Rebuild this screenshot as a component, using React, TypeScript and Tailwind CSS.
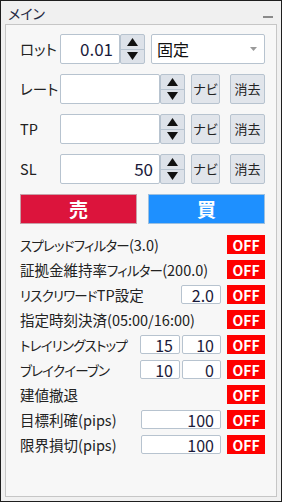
import React from 'react';

// katakana runs are drawn a touch smaller and tighter, as the narrow kana of the reference font
const Label = ({ text }: { text: string }) => (
  <>
    {text.split(/([\u30A0-\u30FF]+)/).map((part, i) =>
      /[\u30A0-\u30FF]/.test(part) ? (
        <span key={i} className="text-[13.5px] tracking-[-0.8px]">
          {part}
        </span>
      ) : (
        <span key={i}>{part}</span>
      )
    )}
  </>
);

const Spinner = () => (
  <div className="flex h-[30px] w-[25px] shrink-0 flex-col rounded-[2px] border border-[#b7c3cf] bg-[#dde2e9]">
    <div className="flex flex-1 items-center justify-center border-b border-[#b7c3cf]">
      <svg width="11" height="8" viewBox="0 0 11 8">
        <polygon points="5.5,0 11,8 0,8" fill="#111" />
      </svg>
    </div>
    <div className="flex flex-1 items-center justify-center">
      <svg width="11" height="8" viewBox="0 0 11 8">
        <polygon points="0,0 11,0 5.5,8" fill="#111" />
      </svg>
    </div>
  </div>
);

const SmallButton = ({ label, w }: { label: string; w: string }) => (
  <div
    className={`flex h-[30px] ${w} shrink-0 items-center justify-center rounded-[2px] border border-[#b7c3cf] bg-[#e1e5eb] text-[13px] text-[#222]`}
  >
    {label}
  </div>
);

const PriceRow = ({ label, value }: { label: string; value?: string }) => (
  <div className="flex h-[30px] items-center">
    <div className="w-[40px] shrink-0 text-[14.5px] text-[#222]">{label}</div>
    <div className="flex h-[30px] w-[100px] shrink-0 items-center justify-end rounded-[2px] border border-[#b7c3cf] bg-white pr-[6px] text-[17px] text-[#1a1a3a]">
      {value}
    </div>
    <Spinner />
    <div className="ml-[6px]">
      <SmallButton label="ナビ" w="w-[29px]" />
    </div>
    <div className="ml-auto">
      <SmallButton label="消去" w="w-[35px]" />
    </div>
  </div>
);

const Off = () => (
  <div className="flex h-[19px] w-[38px] shrink-0 items-center justify-center bg-[#ff0000] text-[14px] font-bold leading-none text-white">
    OFF
  </div>
);

const NumBox = ({ value, w }: { value: string; w: string }) => (
  <div
    className={`flex h-[19px] ${w} shrink-0 items-center justify-end rounded-[2px] border border-[#b7c3cf] bg-white pr-[6px] text-[16px] leading-none text-[#1a1a3a]`}
  >
    {value}
  </div>
);

type Toggle = { label: string; boxes?: { value: string; w: string }[] };

const toggles: Toggle[] = [
  { label: 'スプレッドフィルター(3.0)' },
  { label: '証拠金維持率フィルター(200.0)' },
  { label: 'リスクリワードTP設定', boxes: [{ value: '2.0', w: 'w-[40px]' }] },
  { label: '指定時刻決済(05:00/16:00)' },
  {
    label: 'トレイリングストップ',
    boxes: [
      { value: '15', w: 'w-[40px]' },
      { value: '10', w: 'w-[39px]' },
    ],
  },
  {
    label: 'ブレイクイーブン',
    boxes: [
      { value: '10', w: 'w-[40px]' },
      { value: '0', w: 'w-[39px]' },
    ],
  },
  { label: '建値撤退' },
  { label: '目標利確(pips)', boxes: [{ value: '100', w: 'w-[80px]' }] },
  { label: '限界損切(pips)', boxes: [{ value: '100', w: 'w-[80px]' }] },
];

export default function App() {
  return (
    <div className="flex h-[502px] w-[282px] flex-col border border-[#1e1e1e] bg-[#f0f0f0] font-['Noto_Sans_CJK_JP','Noto_Sans',sans-serif] [font-feature-settings:'palt']">
      {/* title bar */}
      <div className="flex h-[23px] shrink-0 items-center justify-between pl-[7px] pr-[8px]">
        <span className="text-[14px] leading-none text-[#1f2a44]">メイン</span>
        <div className="mt-[8px] h-[2px] w-[10px] bg-[#8a8a8a]" />
      </div>

      {/* panel */}
      <div className="mx-[4px] mb-[4px] flex flex-1 flex-col border border-[#c6c6c6] bg-[#f7f7f7] pl-[14px] pr-[11px] pt-[9px]">
        <div className="flex flex-col gap-[10px]">
          <div className="flex h-[30px] items-center">
            <div className="w-[40px] shrink-0 text-[14.5px] text-[#222]">ロット</div>
            <div className="flex h-[30px] w-[60px] shrink-0 items-center justify-end rounded-[2px] border border-[#b7c3cf] bg-white pr-[6px] text-[17px] text-[#1a1a3a]">
              0.01
            </div>
            <Spinner />
            <div className="ml-[6px] flex h-[30px] flex-1 items-center justify-between rounded-[2px] border border-[#b7c3cf] bg-white pl-[5px] pr-[7px] text-[16px] text-[#111]">
              <span>固定</span>
              <svg width="7" height="4" viewBox="0 0 7 4">
                <polygon points="0,0 7,0 3.5,4" fill="#9a9a9a" />
              </svg>
            </div>
          </div>
          <PriceRow label="レート" />
          <PriceRow label="TP" />
          <PriceRow label="SL" value="50" />
          <div className="flex h-[30px] gap-[11px]">
            <div className="flex flex-1 items-center justify-center border border-[#c8a0a8] bg-[#dc143c] text-[19px] font-bold text-white">
              売
            </div>
            <div className="flex flex-1 items-center justify-center border border-[#9cc0e0] bg-[#1e90ff] text-[19px] font-bold text-white">
              買
            </div>
          </div>
        </div>

        <div className="mt-[8px] flex flex-col">
          {toggles.map((t) => (
            <div key={t.label} className="flex h-[25px] items-center">
              <span className="flex-1 whitespace-nowrap text-[14.5px] text-[#222]">
                <Label text={t.label} />
              </span>
              <div className="flex gap-[2px]">
                {t.boxes?.map((b, i) => (
                  <NumBox key={i} value={b.value} w={b.w} />
                ))}
              </div>
              <div className="ml-[6px]">
                <Off />
              </div>
            </div>
          ))}
        </div>
      </div>
    </div>
  );
}
